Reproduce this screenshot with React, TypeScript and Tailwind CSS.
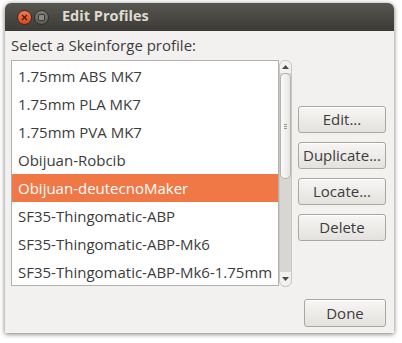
import React from 'react';

const profiles = [
    '1.75mm ABS MK7',
    '1.75mm PLA MK7',
    '1.75mm PVA MK7',
    'Obijuan-Robcib',
    'Obijuan-deutecnoMaker',
    'SF35-Thingomatic-ABP',
    'SF35-Thingomatic-ABP-Mk6',
    'SF35-Thingomatic-ABP-Mk6-1.75mm',
];

const selected = 'Obijuan-deutecnoMaker';

const DialogButton: React.FC<{ label: string; className?: string }> = ({ label, className = '' }) => (
    <button
        className={`h-[27px] rounded-[3px] border border-[#a9a7a2] bg-gradient-to-b from-[#f7f6f5] to-[#e4e2de] text-[15px] text-[#3c3c3c] shadow-[inset_0_1px_0_#ffffff] ${className}`}
    >
        {label}
    </button>
);

const Arrow: React.FC<{ up?: boolean }> = ({ up }) => (
    <svg width="7" height="4" viewBox="0 0 7 4">
        {up ? <polygon points="0,4 7,4 3.5,0" fill="#4a4a4a" /> : <polygon points="0,0 7,0 3.5,4" fill="#4a4a4a" />}
    </svg>
);

export default function App() {
    return (
        <div className="w-[402px] h-[343px] bg-white pl-[5px] pt-[3px] font-['Open_Sans',sans-serif]">
            <div className="w-[389px] h-[330px] flex flex-col rounded-t-[6px] shadow-[0_1px_5px_rgba(0,0,0,0.55)] bg-[#f2f1f0]">
                {/* title bar */}
                <div className="h-[28px] flex items-center rounded-t-[6px] bg-gradient-to-b from-[#575650] to-[#3c3b37] pl-[12px]">
                    <div className="w-[15px] h-[15px] rounded-full bg-gradient-to-b from-[#f27a4e] to-[#d9471d] border border-[#3a2a22] flex items-center justify-center">
                        <svg width="7" height="7" viewBox="0 0 7 7">
                            <path d="M1 1 L6 6 M6 1 L1 6" stroke="#4a1a0a" strokeWidth="1.3" />
                        </svg>
                    </div>
                    <div className="ml-[2px] w-[15px] h-[15px] rounded-full bg-gradient-to-b from-[#7d7c77] to-[#5c5b56] border border-[#2e2d2a] flex items-center justify-center">
                        <div className="w-[7px] h-[7px] rounded-[1px] border border-[#3a3935] bg-[#8a8984]" />
                    </div>
                    <span className="ml-[13px] -mt-[2px] text-[14.5px] font-bold text-[#dfdbd2]">Edit Profiles</span>
                </div>

                {/* body */}
                <div className="flex-1 flex flex-col pl-[6px] pr-[8px]">
                    <div className="h-[20px] mt-[4px] text-[15px] leading-[20px] text-[#3c3c3c]">Select a Skeinforge profile:</div>
                    <div className="flex mt-[5px]">
                        <div className="w-[268px] h-[226px] border border-[#b3b1ad] bg-white py-px">
                            {profiles.map((p) => (
                                <div
                                    key={p}
                                    className={`h-[28px] pl-[6px] flex items-center text-[15px] whitespace-nowrap ${
                                        p === selected ? 'bg-[#f07746] text-white' : 'text-[#3c3c3c]'
                                    }`}
                                >
                                    {p}
                                </div>
                            ))}
                        </div>
                        <div className="w-[13px] h-[227px] flex flex-col rounded-[6px] border border-[#c9c7c3] bg-[#d8d6d2] overflow-hidden">
                            <div className="h-[12px] bg-[#f2f1f0] flex items-center justify-center">
                                <Arrow up />
                            </div>
                            <div className="h-[106px] rounded-[5px] border border-[#b4b2ad] bg-gradient-to-r from-[#fbfbfa] to-[#e6e5e2] flex flex-col items-center justify-center gap-[1px]">
                                <div className="w-[3px] h-px bg-[#9a9893]" />
                                <div className="w-[3px] h-px bg-[#9a9893]" />
                                <div className="w-[3px] h-px bg-[#9a9893]" />
                            </div>
                            <div className="flex-1" />
                            <div className="h-[14px] bg-[#f2f1f0] rounded-b-[5px] flex items-center justify-center">
                                <Arrow />
                            </div>
                        </div>
                        <div className="ml-[6px] pt-[46px] flex flex-col gap-[9px]">
                            <DialogButton label="Edit..." className="w-[88px]" />
                            <DialogButton label="Duplicate..." className="w-[88px]" />
                            <DialogButton label="Locate..." className="w-[88px]" />
                            <DialogButton label="Delete" className="w-[88px]" />
                        </div>
                    </div>
                    <div className="flex justify-end mt-[12px]">
                        <DialogButton label="Done" className="w-[82px] h-[28px]" />
                    </div>
                </div>
            </div>
        </div>
    );
}
